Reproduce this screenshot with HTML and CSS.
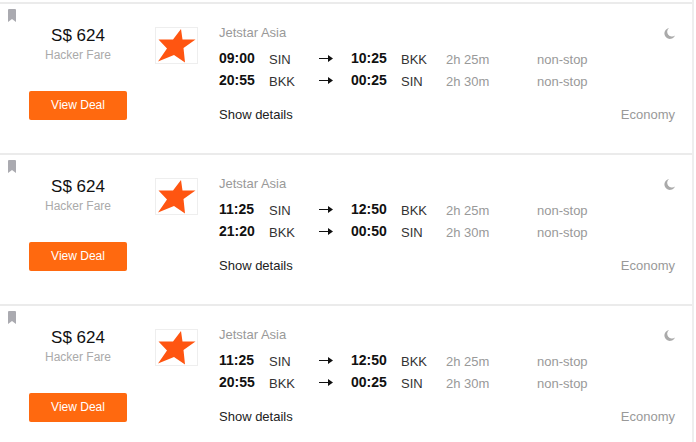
FILE: index.html
```
<!DOCTYPE html>
<html lang="en">
  <head>
    <meta charset="UTF-8" />
    <meta name="viewport" content="width=device-width, initial-scale=1.0" />
    <title>Flights SIN - BKK</title>
    <link rel="stylesheet" href="styles.css">
  </head>
  <body>
    <!-- Shared icons -->
    <svg class="sprite" aria-hidden="true">
      <symbol id="bookmark" viewBox="0 0 8 13">
        <path d="M0 1Q0 0 1 0H7Q8 0 8 1V13L4 10L0 13Z" />
      </symbol>
      <symbol id="star" viewBox="0 0 41 35">
        <path d="M25 1L26.5 11.5L39.5 11.6L27.5 20L29 34.5L18 27L2 33.5L11 20.5L2.5 11.5L17 11.5Z" />
      </symbol>
      <symbol id="moon" viewBox="0 0 11 11">
        <path d="M5 0A5.5 5.5 0 1 0 11 7.5A4.2 4.2 0 0 1 5 0Z" />
      </symbol>
      <symbol id="arrow" viewBox="0 0 14 7">
        <path d="M0 3H9V0L14 3.5L9 7V4H0Z" />
      </symbol>
    </svg>

    <main class="results">
      <article class="card">
        <button class="save" type="button" aria-label="Save"><svg><use href="#bookmark" /></svg></button>
        <div class="booking">
          <div class="price">S$ 624</div>
          <div class="fare">Hacker Fare</div>
          <button class="deal-btn" type="button">View Deal</button>
        </div>
        <div class="logo"><svg><use href="#star" /></svg></div>
        <div class="details">
          <div class="row">
            <span>Jetstar Asia</span>
            <svg class="moon"><use href="#moon" /></svg>
          </div>
          <table class="legs">
            <tr>
              <td class="time">09:00</td>
              <td class="code">SIN</td>
              <td class="arrow"><svg><use href="#arrow" /></svg></td>
              <td class="time">10:25</td>
              <td class="code arrival">BKK</td>
              <td class="duration">2h 25m</td>
              <td class="stops">non-stop</td>
            </tr>
            <tr>
              <td class="time">20:55</td>
              <td class="code">BKK</td>
              <td class="arrow"><svg><use href="#arrow" /></svg></td>
              <td class="time">00:25</td>
              <td class="code arrival">SIN</td>
              <td class="duration">2h 30m</td>
              <td class="stops">non-stop</td>
            </tr>
          </table>
          <div class="row">
            <a class="more" href="#">Show details</a>
            <span>Economy</span>
          </div>
        </div>
      </article>

      <article class="card">
        <button class="save" type="button" aria-label="Save"><svg><use href="#bookmark" /></svg></button>
        <div class="booking">
          <div class="price">S$ 624</div>
          <div class="fare">Hacker Fare</div>
          <button class="deal-btn" type="button">View Deal</button>
        </div>
        <div class="logo"><svg><use href="#star" /></svg></div>
        <div class="details">
          <div class="row">
            <span>Jetstar Asia</span>
            <svg class="moon"><use href="#moon" /></svg>
          </div>
          <table class="legs">
            <tr>
              <td class="time">11:25</td>
              <td class="code">SIN</td>
              <td class="arrow"><svg><use href="#arrow" /></svg></td>
              <td class="time">12:50</td>
              <td class="code arrival">BKK</td>
              <td class="duration">2h 25m</td>
              <td class="stops">non-stop</td>
            </tr>
            <tr>
              <td class="time">21:20</td>
              <td class="code">BKK</td>
              <td class="arrow"><svg><use href="#arrow" /></svg></td>
              <td class="time">00:50</td>
              <td class="code arrival">SIN</td>
              <td class="duration">2h 30m</td>
              <td class="stops">non-stop</td>
            </tr>
          </table>
          <div class="row">
            <a class="more" href="#">Show details</a>
            <span>Economy</span>
          </div>
        </div>
      </article>

      <article class="card">
        <button class="save" type="button" aria-label="Save"><svg><use href="#bookmark" /></svg></button>
        <div class="booking">
          <div class="price">S$ 624</div>
          <div class="fare">Hacker Fare</div>
          <button class="deal-btn" type="button">View Deal</button>
        </div>
        <div class="logo"><svg><use href="#star" /></svg></div>
        <div class="details">
          <div class="row">
            <span>Jetstar Asia</span>
            <svg class="moon"><use href="#moon" /></svg>
          </div>
          <table class="legs">
            <tr>
              <td class="time">11:25</td>
              <td class="code">SIN</td>
              <td class="arrow"><svg><use href="#arrow" /></svg></td>
              <td class="time">12:50</td>
              <td class="code arrival">BKK</td>
              <td class="duration">2h 25m</td>
              <td class="stops">non-stop</td>
            </tr>
            <tr>
              <td class="time">20:55</td>
              <td class="code">BKK</td>
              <td class="arrow"><svg><use href="#arrow" /></svg></td>
              <td class="time">00:25</td>
              <td class="code arrival">SIN</td>
              <td class="duration">2h 30m</td>
              <td class="stops">non-stop</td>
            </tr>
          </table>
          <div class="row">
            <a class="more" href="#">Show details</a>
            <span>Economy</span>
          </div>
        </div>
      </article>
    </main>
  </body>
</html>
```
FILE: styles.css
```
* {
  margin: 0;
  padding: 0;
  box-sizing: border-box;
}

body {
  font-family: "Liberation Sans", Arial, sans-serif;
  font-size: 13px;
  line-height: 18px;
  color: #999;
  background: #fff;
}

/* the list runs on below the fold, no scrollbar wanted */
html {
  scrollbar-width: none;
}

svg {
  display: block;
  fill: currentColor;
}

button {
  font-family: inherit;
  border: none;
  cursor: pointer;
}

.sprite {
  position: absolute;
  width: 0;
  height: 0;
}

.results {
  margin-right: 2px;
  padding-top: 2px;
  border-right: 2px solid #eee;
}

.card {
  display: flex;
  align-items: flex-start;
  padding: 20px 17px 29px 8px;
  border-top: 2px solid #ebebeb;
}

/* bookmark sits above the card content */
.save {
  margin-top: -15px;
  background: none;
  color: #aaaab0;
}

.save svg {
  width: 8px;
  height: 13px;
}

.booking {
  width: 98px;
  margin: 2px 28px 0 13px;
  text-align: center;
}

.price {
  font-size: 17px;
  line-height: 20px;
  color: #111;
}

.fare {
  font-size: 12px;
  line-height: 18px;
  color: #aaa;
}

.deal-btn {
  width: 100%;
  height: 29px;
  margin-top: 27px;
  padding-bottom: 2px;
  border-radius: 2px;
  background: #ff690f;
  color: #fff;
  font-size: 12px;
}

.logo {
  width: 43px;
  margin: 3px 21px 0 0;
  border: 1px solid #eee;
}

.logo svg {
  width: 41px;
  height: 35px;
  color: #ff5511;
}

.details {
  flex: 1;
}

.row {
  display: flex;
  justify-content: space-between;
  align-items: center;
}

.moon {
  width: 11px;
  height: 11px;
  color: #aaa;
}

.legs {
  width: 100%;
  margin: 5px 0 15px;
  table-layout: fixed;
  border-collapse: collapse;
}

.legs td {
  height: 22px;
}

.legs .time {
  width: 50px;
  font-size: 14px;
  font-weight: bold;
  color: #111;
}

.legs .code,
.legs .duration,
.legs .stops {
  padding-top: 3px;
}

.legs .code {
  width: 50px;
  color: #333;
}

.legs .arrival {
  width: 45px;
}

.legs .arrow {
  width: 32px;
  color: #111;
}

.arrow svg {
  width: 14px;
  height: 7px;
}

.legs .duration {
  width: 91px;
}

.more {
  color: #222;
  text-decoration: none;
}
```
